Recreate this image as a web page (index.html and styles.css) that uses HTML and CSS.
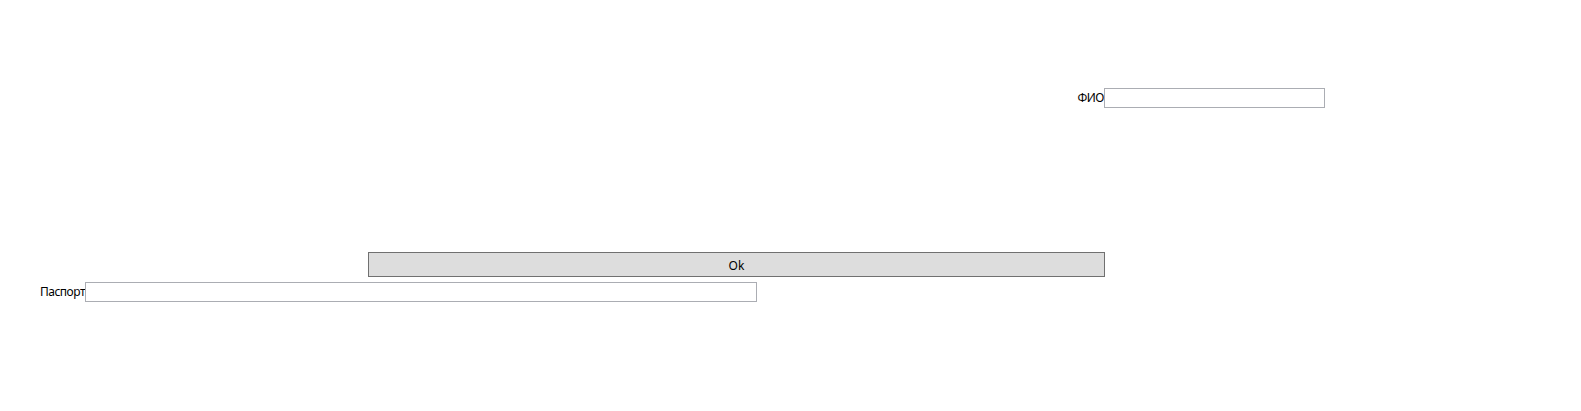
FILE: index.html
```html
<!DOCTYPE html>
<html lang="ru">
<head>
<meta charset="utf-8">
<title>Form</title>
<link rel="stylesheet" href="styles.css">
</head>
<body>
<div class="page">
  <div class="row row-fio">
    <label class="label label-fio" for="fio">ФИО</label>
    <input class="field field-fio" id="fio" type="text">
  </div>
  <div class="row row-btn">
    <button class="btn-ok" type="button">Ok</button>
  </div>
  <div class="row row-passport">
    <label class="label label-passport" for="passport">Паспорт</label>
    <input class="field field-passport" id="passport" type="text">
  </div>
</div>
</body>
</html>
```
FILE: styles.css
```css
html, body {
  margin: 0;
  padding: 0;
  background: #ffffff;
}
body {
  font-family: "Noto Sans", "Open Sans", "DejaVu Sans", sans-serif;
  font-size: 12px;
  color: #000000;
  width: 1581px;
  height: 411px;
  overflow: hidden;
}
.page {
  display: flex;
  flex-direction: column;
  padding-top: 88px;
}
.row {
  display: flex;
  align-items: center;
}
.label {
  text-align: right;
  line-height: 20px;
  white-space: nowrap;
  letter-spacing: -0.5px;
}
.label-fio {
  width: 1104px;
}
.label-passport {
  width: 85px;
}
.field {
  box-sizing: border-box;
  height: 20px;
  border: 1px solid #abadb3;
  background: #ffffff;
  margin: 0;
  padding: 0 2px;
  font: inherit;
  outline: none;
}
.field-fio {
  width: 221px;
}
.field-passport {
  width: 672px;
}
.row-btn {
  margin-top: 144px;
  padding-left: 368px;
}
.btn-ok {
  box-sizing: border-box;
  width: 737px;
  height: 25px;
  margin: 0;
  padding: 2px 0 0;
  border: 1px solid #707070;
  background: #dddddd;
  font: inherit;
  color: #000000;
  line-height: 20px;
}
.row-passport {
  margin-top: 5px;
}
```
